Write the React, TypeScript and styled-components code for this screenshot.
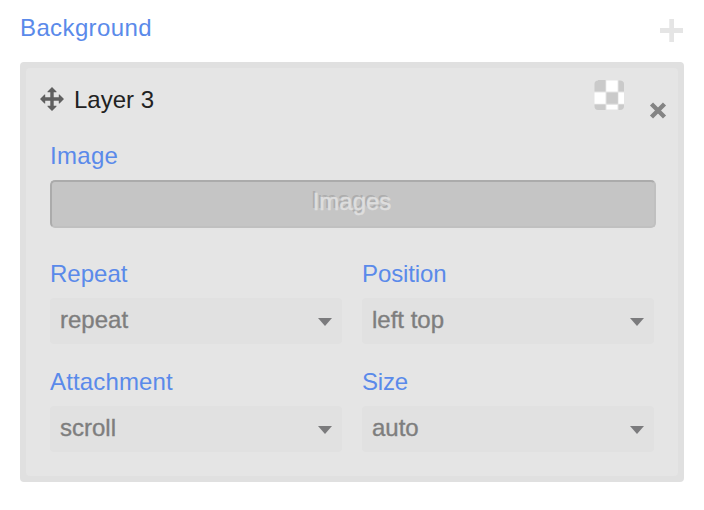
import React from 'react';
import styled, { createGlobalStyle } from 'styled-components';

const GlobalStyle = createGlobalStyle`
  * { box-sizing: border-box; }
  body {
    margin: 0;
    background: #fff;
    font-family: "Liberation Sans", Arial, sans-serif;
    font-size: 24px;
    line-height: 28px;
  }
`;

const Section = styled.section`
  width: 704px;
  height: 510px;
  padding: 0 20px;
`;

const SectionHeader = styled.header`
  display: flex;
  justify-content: space-between;
  height: 62px;
  padding-top: 14px;
`;

const Label = styled.label<{ $spacing?: number }>`
  display: block;
  height: 28px;
  color: #5a8aea;
  white-space: nowrap;
  letter-spacing: ${(p) => p.$spacing ?? 0}px;
`;

const IconButton = styled.button`
  display: block;
  padding: 0;
  border: 0;
  background: none;
  svg { display: block; }
`;

const AddButton = styled(IconButton)`
  margin-top: 5px;
  height: 23px;
`;

const Panel = styled.div`
  height: 420px;
  border: 6px solid #e0e0e0;
  border-radius: 4px;
  background: #e0e0e0;
`;

const PanelBody = styled.div`
  height: 408px;
  padding: 0 24px;
  border-radius: 4px;
  background: #e5e5e5;
`;

const LayerHeader = styled.div`
  display: flex;
  align-items: flex-start;
  height: 74px;
  margin: 0 -13px 0 -10px;
  padding-top: 12px;
`;

const MoveHandle = styled.span`
  margin-top: 7px;
  svg { display: block; }
`;

const LayerName = styled.span`
  flex: 1;
  margin: 6px 0 0 10px;
  color: #222;
`;

const CloseButton = styled(IconButton)`
  margin: 21px 0 0 25px;
`;

const ImagesButton = styled.button`
  display: block;
  width: 606px;
  height: 48px;
  margin: 10px 0 26px;
  padding: 0 2px 4px 0;
  border: 2px solid;
  border-color: #ababab #c0c0c0 #c0c0c0 #ababab;
  border-radius: 5px;
  background: #c5c5c5;
  color: #dedede;
  font: inherit;
  -webkit-text-stroke: 0.5px;
  text-shadow: -2px -2px 0 #adadad;
`;

const Fields = styled.div`
  display: grid;
  grid-template-columns: 292px 292px;
  gap: 24px 20px;
  margin-top: 32px;
`;

const Select = styled.div`
  display: flex;
  justify-content: space-between;
  height: 46px;
  margin-top: 10px;
  padding: 8px 10px;
  border-radius: 4px;
  background: #e1e1e1;
  color: #7e7e7e;
  -webkit-text-stroke: 0.35px #7e7e7e;
  svg { margin-top: 12px; }
`;

const fields = [
  { label: 'Repeat', value: 'repeat', spacing: 0 },
  { label: 'Position', value: 'left top', spacing: -0.1 },
  { label: 'Attachment', value: 'scroll', spacing: 0.15 },
  { label: 'Size', value: 'auto', spacing: -0.2 },
];

const PlusIcon = () => (
  <svg width="24" height="23" viewBox="0 0 24 23">
    <path d="M0 9h9.3V0h4.7v9h9v5h-9v9H9.3v-9H0z" fill="#e5e5e5" />
  </svg>
);

const MoveIcon = () => (
  <svg width="24" height="24" viewBox="0 0 24 24">
    <path
      d="M12 0l4.5 4.5v.7h-2.8v5.1h5.1V7.5h.7L24 12l-4.5 4.5h-.7v-2.8h-5.1v5.1h2.8v.7L12 24l-4.5-4.5v-.7h2.8v-5.1H5.2v2.8h-.7L0 12l4.5-4.5h.7v2.8h5.1V5.2H7.5v-.7z"
      fill="#606060"
    />
  </svg>
);

const CheckerSwatch = () => (
  <svg width="30" height="30" viewBox="0 0 30 30">
    <rect width="30" height="30" rx="4" fill="#e5e5e5" />
    <path d="M4 0H11.5V11.5H.5V4Q.5 .5 4 .5zM12.5 12.5h11.3v11.3H12.5zM24.5 .5H26Q30 .5 30 4V11.5H24.5zM.5 24.5H11.5V30H4Q.5 30 .5 26zM24.5 24.5H30V26Q30 30 26 30h-1.5z" fill="#cacaca" />
    <path d="M12.3 .6h11.3v10.9H12.3zM.5 12.5h11v11.2H.5zM24.5 12.5H30v11.2h-5.5zM12.5 25h11v4.5h-11z" fill="#fff" />
  </svg>
);

const CloseIcon = () => (
  <svg width="18" height="18" viewBox="0 0 18 18">
    <path d="M2.5 3l13 13M15.5 3l-13 13" stroke="#848484" strokeWidth="4.4" />
  </svg>
);

const Caret = () => (
  <svg width="14" height="8" viewBox="0 0 14 8">
    <path d="M0 0h14L7 8z" fill="#7b7b7d" />
  </svg>
);

export default function App() {
  return (
    <>
      <GlobalStyle />
      <Section>
        <SectionHeader>
          <Label $spacing={0.38}>Background</Label>
          <AddButton aria-label="Add layer"><PlusIcon /></AddButton>
        </SectionHeader>
        <Panel>
          <PanelBody>
            <LayerHeader>
              <MoveHandle><MoveIcon /></MoveHandle>
              <LayerName>Layer 3</LayerName>
              <CheckerSwatch />
              <CloseButton aria-label="Remove layer"><CloseIcon /></CloseButton>
            </LayerHeader>
            <Label $spacing={0.3}>Image</Label>
            <ImagesButton>Images</ImagesButton>
            <Fields>
              {fields.map((f) => (
                <div key={f.label}>
                  <Label $spacing={f.spacing}>{f.label}</Label>
                  <Select>
                    {f.value}
                    <Caret />
                  </Select>
                </div>
              ))}
            </Fields>
          </PanelBody>
        </Panel>
      </Section>
    </>
  );
}
